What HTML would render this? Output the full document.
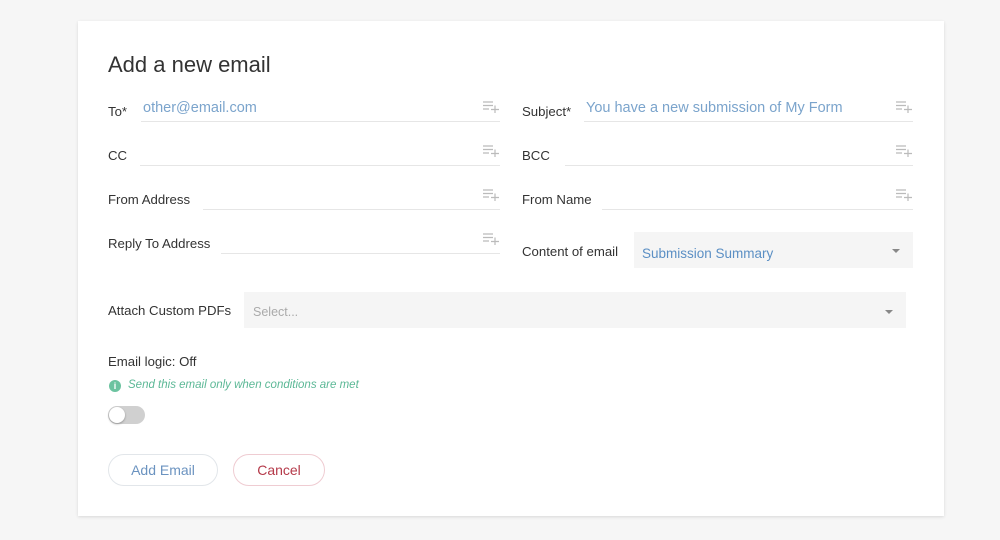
<!DOCTYPE html>
<html><head><style>
*{box-sizing:border-box;margin:0;padding:0}
body{width:1000px;height:540px;background:#f6f6f6;font-family:"Liberation Sans",sans-serif;position:relative;overflow:hidden;color:#333}
.card{position:absolute;left:78px;top:21px;width:866px;height:495px;background:#fff;box-shadow:0 1px 3px rgba(0,0,0,.12)}
.a{position:absolute}
h1{position:absolute;left:108px;top:52px;font-size:22px;font-weight:normal;color:#333}
.lbl{position:absolute;font-size:13.2px;color:#333}
.line{position:absolute;height:1px;background:#e6e6e6}
.val{position:absolute;font-size:14.5px;color:#7ba4cc}
.ic{position:absolute;width:16px;height:12px}
.sel{position:absolute;background:#f5f5f5}
.car{position:absolute;width:0;height:0;border-left:4px solid transparent;border-right:4px solid transparent;border-top:4px solid #888}
.btn{position:absolute;height:32px;border-radius:16px;font-size:14px;text-align:center;line-height:30px}
</style></head><body>
<div class="card"></div>
<h1>Add a new email</h1>

<div class="lbl" style="left:108px;top:104px">To*</div>
<div class="val" style="left:143px;top:100px">other@email.com</div>
<div class="line" style="left:141px;top:121px;width:359px"></div>
<div class="lbl" style="left:108px;top:148px">CC</div>
<div class="line" style="left:140px;top:165px;width:360px"></div>
<div class="lbl" style="left:108px;top:192px">From Address</div>
<div class="line" style="left:203px;top:209px;width:297px"></div>
<div class="lbl" style="left:108px;top:236px">Reply To Address</div>
<div class="line" style="left:221px;top:253px;width:279px"></div>

<div class="lbl" style="left:522px;top:104px">Subject*</div>
<div class="val" style="left:586px;top:100px">You have a new submission of My Form</div>
<div class="line" style="left:584px;top:121px;width:329px"></div>
<div class="lbl" style="left:522px;top:148px">BCC</div>
<div class="line" style="left:565px;top:165px;width:348px"></div>
<div class="lbl" style="left:522px;top:192px">From Name</div>
<div class="line" style="left:602px;top:209px;width:311px"></div>
<div class="lbl" style="left:522px;top:244px">Content of email</div>
<div class="sel" style="left:634px;top:232px;width:279px;height:36px"></div>
<div class="val" style="left:642px;top:246px;font-size:13.5px;color:#5b8fc4">Submission Summary</div>
<div class="car" style="left:892px;top:249px"></div>

<svg class="ic" style="left:483px;top:101px" viewBox="0 0 16 12"><g stroke="#bbb" stroke-width="1.2"><path d="M0 1H10M0 4.5H10M0 8H6M8 8.5H16M12 4.5V12.5"/></g></svg>
<svg class="ic" style="left:483px;top:145px" viewBox="0 0 16 12"><g stroke="#bbb" stroke-width="1.2"><path d="M0 1H10M0 4.5H10M0 8H6M8 8.5H16M12 4.5V12.5"/></g></svg>
<svg class="ic" style="left:483px;top:189px" viewBox="0 0 16 12"><g stroke="#bbb" stroke-width="1.2"><path d="M0 1H10M0 4.5H10M0 8H6M8 8.5H16M12 4.5V12.5"/></g></svg>
<svg class="ic" style="left:483px;top:233px" viewBox="0 0 16 12"><g stroke="#bbb" stroke-width="1.2"><path d="M0 1H10M0 4.5H10M0 8H6M8 8.5H16M12 4.5V12.5"/></g></svg>
<svg class="ic" style="left:896px;top:101px" viewBox="0 0 16 12"><g stroke="#bbb" stroke-width="1.2"><path d="M0 1H10M0 4.5H10M0 8H6M8 8.5H16M12 4.5V12.5"/></g></svg>
<svg class="ic" style="left:896px;top:145px" viewBox="0 0 16 12"><g stroke="#bbb" stroke-width="1.2"><path d="M0 1H10M0 4.5H10M0 8H6M8 8.5H16M12 4.5V12.5"/></g></svg>
<svg class="ic" style="left:896px;top:189px" viewBox="0 0 16 12"><g stroke="#bbb" stroke-width="1.2"><path d="M0 1H10M0 4.5H10M0 8H6M8 8.5H16M12 4.5V12.5"/></g></svg>

<div class="lbl" style="left:108px;top:303px">Attach Custom PDFs</div>
<div class="sel" style="left:244px;top:292px;width:662px;height:36px"></div>
<div class="a" style="left:253px;top:305px;font-size:12.5px;color:#aaa">Select...</div>
<div class="car" style="left:885px;top:310px"></div>

<div class="lbl" style="left:108px;top:354px">Email logic: Off</div>
<div class="a" style="left:109px;top:380px;width:12px;height:12px;border-radius:50%;background:#6cc3a0;color:#fff;font-size:9px;font-weight:bold;text-align:center;line-height:12px">i</div>
<div class="a" style="left:128px;top:379px;font-size:11.5px;font-style:italic;color:#5cb896">Send this email only when conditions are met</div>
<div class="a" style="left:108px;top:406px;width:37px;height:18px;border-radius:9px;background:#d0d0d0"></div>
<div class="a" style="left:109px;top:407px;width:16px;height:16px;border-radius:50%;background:#fff;box-shadow:0 1px 2px rgba(0,0,0,.3)"></div>

<div class="btn" style="left:108px;top:454px;width:110px;border:1px solid #e2e6ea;color:#6b93c0">Add Email</div>
<div class="btn" style="left:233px;top:454px;width:92px;border:1px solid #efccd2;color:#b53a4a">Cancel</div>
</body></html>
